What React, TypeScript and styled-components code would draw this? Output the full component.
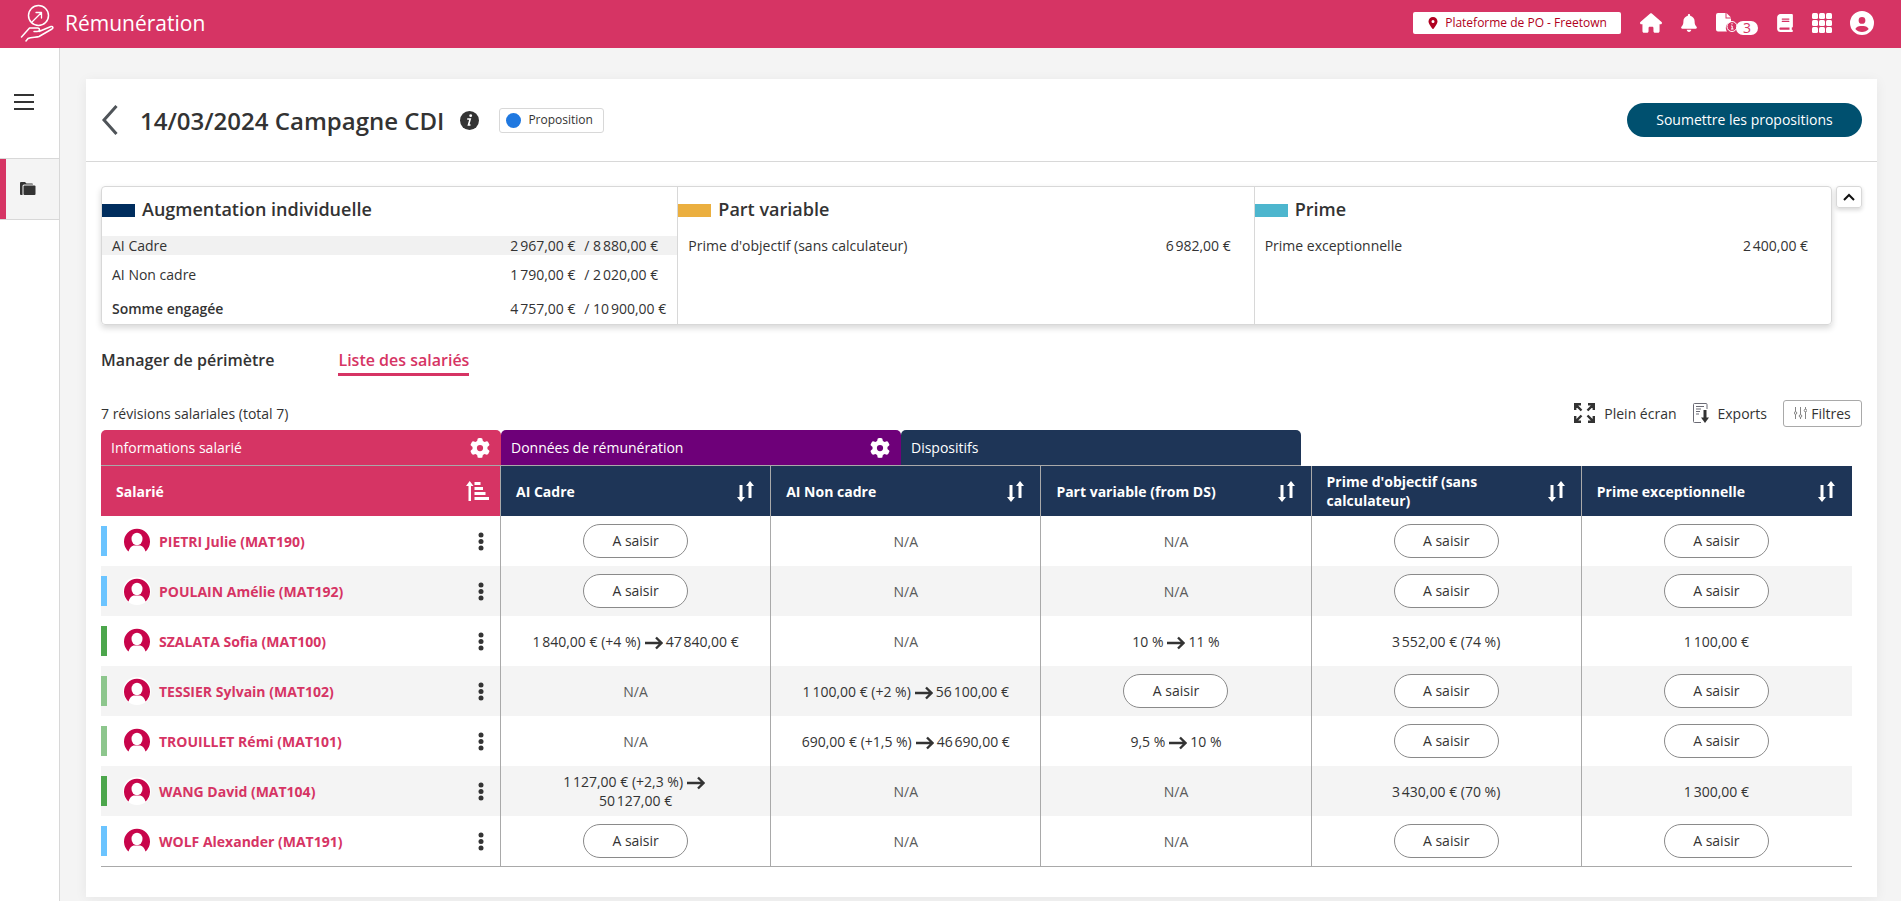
import React from "react";
import styled, { createGlobalStyle } from "styled-components";
import { FaBell, FaBook, FaCircleUser, FaGear, FaHouse, FaLocationDot } from "react-icons/fa6";

const c = {
  brand: "#d63464",
  navy: "#1e3557",
  purple: "#6e0079",
  ink: "#333333",
  line: "#d8d8d8",
  rule: "#a9a9a9",
  grey: "#f4f4f4",
};

const GlobalStyle = createGlobalStyle`
  *, *::before, *::after { box-sizing: border-box; }
  body {
    margin: 0;
    background: ${c.grey};
    color: ${c.ink};
    font: 400 14px/19px "Open Sans", "Noto Sans", sans-serif;
  }
  button { font: inherit; color: inherit; padding: 0; margin: 0; border: 0; background: none; cursor: pointer; }
  a { color: inherit; text-decoration: none; }
  h1, h2, p, dl, dt, dd { margin: 0; }
  svg { display: block; flex: none; }
`;

const Page = styled.div`
  min-height: 100vh;
  display: flex;
  flex-direction: column;
`;

const TopBar = styled.header`
  height: 48px;
  padding: 0 27px 2px 20px;
  display: flex;
  align-items: center;
  background: ${c.brand};
  color: #fff;
`;

const AppName = styled.div`
  flex: 1;
  margin-left: 11px;
  font-size: 21px;
  line-height: 28px;
`;

const SiteButton = styled.button`
  height: 22px;
  width: 208px;
  display: flex;
  align-items: center;
  justify-content: center;
  gap: 6px;
  border-radius: 2px;
  background: #fff;
  color: #b00020;
  font-size: 12px;
  line-height: 16px;
`;

const TopIcons = styled.nav`
  display: flex;
  align-items: center;
  gap: 18px;
  margin-left: 19px;
`;

const IconButton = styled.button`
  display: flex;
  align-items: center;
  position: relative;
`;

const DocButton = styled(IconButton)`
  width: 42px;
`;

const Count = styled.span`
  position: absolute;
  left: 20px;
  top: 8px;
  width: 22px;
  height: 14px;
  border-radius: 7px;
  background: #fff;
  color: ${c.brand};
  font-size: 14px;
  line-height: 14px;
  text-align: center;
`;

const Body = styled.div`
  flex: 1;
  display: flex;
`;

const SideBar = styled.nav`
  width: 60px;
  flex: none;
  background: #fff;
  border-right: 1px solid ${c.line};
`;

const MenuButton = styled.button`
  display: flex;
  align-items: center;
  width: 100%;
  height: 110px;
  padding-left: 14px;
`;

const SideLink = styled.a`
  display: flex;
  align-items: center;
  height: 62px;
  padding-left: 20px;
  border: solid ${c.line};
  border-width: 1px 0;
  background: ${c.grey};
  box-shadow: inset 6px 0 0 ${c.brand};
`;

const Main = styled.main`
  flex: 1;
  min-width: 0;
  padding: 31px 24px 4px 26px;
`;

const Card = styled.section`
  background: #fff;
  box-shadow: 0 2px 12px rgba(0, 0, 0, 0.06);
  padding-bottom: 30px;
`;

const CardHead = styled.div`
  display: flex;
  align-items: center;
  height: 83px;
  padding: 0 15px;
  border-bottom: 1px solid ${c.line};
`;

const Title = styled.h1`
  margin: 0 16px 0 22px;
  padding-top: 2px;
  font-size: 24px;
  line-height: 32px;
  font-weight: 600;
`;

const Status = styled.span`
  display: flex;
  align-items: center;
  gap: 7px;
  height: 25px;
  margin-left: 20px;
  padding: 0 10px 0 6px;
  border: 1px solid ${c.line};
  border-radius: 3px;
  font-size: 12px;
  line-height: 16px;
`;

const StatusDot = styled.i`
  width: 15px;
  height: 15px;
  border-radius: 50%;
  background: #1f78e0;
`;

const Submit = styled.button`
  height: 34px;
  width: 235px;
  margin-left: auto;
  padding-bottom: 2px;
  border-radius: 17px;
  background: #00506f;
  color: #fff;
`;

const Content = styled.div`
  padding: 24px 15px 0;
`;

const Overview = styled.div`
  display: flex;
  align-items: flex-start;
  gap: 4px;
`;

const Envelopes = styled.div`
  flex: 1;
  display: grid;
  grid-template-columns: repeat(3, 1fr);
  border: 1px solid ${c.line};
  border-radius: 4px;
  box-shadow: 0 3px 6px rgba(0, 0, 0, 0.16);
`;

const Envelope = styled.section`
  padding-bottom: 6px;
  border-right: 1px solid ${c.line};
  &:last-child { border-right: 0; }
`;

const EnvelopeTitle = styled.h2<{ $color: string }>`
  display: flex;
  align-items: center;
  gap: 7px;
  height: 24px;
  margin: 10px 0 15px;
  font-size: 18px;
  line-height: 24px;
  font-weight: 600;
  &::before {
    content: "";
    width: 33px;
    height: 13px;
    margin-top: 2px;
    background: ${(p) => p.$color};
  }
`;

const EnvelopeRow = styled.div<{ $shaded?: boolean; $total?: boolean }>`
  display: flex;
  height: 19px;
  margin-top: ${(p) => (p.$total ? 15 : 10)}px;
  padding-left: 10px;
  background: ${(p) => (p.$shaded ? "#f1f1f1" : "none")};
  &:first-child { margin-top: 0; }
  dt { flex: 1; font-weight: ${(p) => (p.$total ? 600 : 400)}; }
`;

const Spent = styled.dd<{ $alone?: boolean }>`
  width: ${(p) => (p.$alone ? 88 : 74)}px;
`;

const Budget = styled.dd`
  width: 93px;
`;

const Toggle = styled.button`
  display: flex;
  align-items: center;
  justify-content: center;
  width: 26px;
  height: 22px;
  border: 1px solid ${c.line};
  border-radius: 3px;
  box-shadow: 0 2px 4px rgba(0, 0, 0, 0.16);
`;

const Tabs = styled.nav`
  display: flex;
  gap: 64px;
  margin-top: 21px;
`;

const Tab = styled.a<{ $active?: boolean }>`
  height: 30px;
  padding-top: 3px;
  font-size: 16px;
  line-height: 22px;
  font-weight: 600;
  color: ${(p) => (p.$active ? c.brand : c.ink)};
  border-bottom: 3px solid ${(p) => (p.$active ? c.brand : "transparent")};
`;

const Tools = styled.div`
  display: flex;
  align-items: center;
  height: 28px;
  margin-top: 23px;
  p { flex: 1; }
`;

const Tool = styled.button`
  display: flex;
  align-items: center;
  gap: 9px;
  margin-right: 16px;
`;

const FilterButton = styled.button`
  display: flex;
  align-items: center;
  justify-content: center;
  gap: 4px;
  width: 79px;
  height: 27px;
  border: 1px solid ${c.rule};
  border-radius: 3px;
`;

const Groups = styled.div`
  display: flex;
  margin-top: 3px;
`;

const Group = styled.div<{ $bg: string }>`
  display: flex;
  align-items: center;
  justify-content: space-between;
  width: 400px;
  height: 36px;
  padding: 0 11px 0 10px;
  border-bottom: 1px solid ${c.rule};
  border-radius: 5px 5px 0 0;
  background: ${(p) => p.$bg};
  color: #fff;
`;

const Table = styled.table`
  width: calc(100% - 10px);
  table-layout: fixed;
  border-collapse: separate;
  border-spacing: 0;
  border-bottom: 1px solid ${c.rule};
  tbody tr:nth-child(even) { background: ${c.grey}; }
`;

const NameCol = styled.col`
  width: 400px;
`;

const HeadCell = styled.th<{ $bg: string }>`
  height: 50px;
  padding: 0 16px 0 15px;
  background: ${(p) => p.$bg};
  color: #fff;
  font-weight: 700;
  text-align: left;
  border-right: 1px solid ${c.rule};
  &:first-child { padding-right: 11px; }
  &:last-child { border-right-color: ${(p) => p.$bg}; }
`;

const HeadInner = styled.div`
  display: flex;
  align-items: center;
  justify-content: space-between;
  gap: 40px;
`;

const Cell = styled.td`
  height: 50px;
  padding: 0 28px;
  text-align: center;
  border-right: 1px solid ${c.rule};
  &:last-child { border-right-color: transparent; }
`;

const NameCell = styled.th`
  height: 50px;
  padding: 0;
  border-right: 1px solid ${c.rule};
  text-align: left;
`;

const Person = styled.div`
  display: flex;
  align-items: center;
  padding-right: 16px;
`;

const Stripe = styled.i<{ $color: string }>`
  width: 6px;
  height: 30px;
  margin-right: 16px;
  background: ${(p) => p.$color};
`;

const PersonLink = styled.a`
  flex: 1;
  margin-left: 8px;
  color: ${c.brand};
  font-weight: 700;
`;

const Enter = styled.button`
  width: 105px;
  height: 34px;
  padding-bottom: 2px;
  border: 1px solid #8a8a8a;
  border-radius: 17px;
  background: #fff;
  vertical-align: middle;
`;

const None = styled.span`
  color: #5a5a5a;
`;

const Arrow = styled.svg`
  display: inline-block;
  margin: 0 3px 0 4px;
  vertical-align: -3px;
`;

const Logo = () => (
  <svg width="34" height="40" viewBox="0 0 34 40" fill="none" stroke="#fff" strokeWidth="1.5" strokeLinecap="round" strokeLinejoin="round">
    <circle cx="18.5" cy="12.500" r="10" />
    <path d="M11.500 19.500 21.500 9.500M16 9.500h5.500V15" strokeWidth="1.3" />
    <path d="M1.500 34 9.500 25h8c2.500 0 3 3.500-.5 3.500H14M19 28.500 31 23.500c2-.5 2.500 1.500 1 2.500L19 33.500c-2 1-8 .5-11 2l-2 2.500" />
  </svg>
);

const DocIcon = () => (
  <svg width="22" height="20" viewBox="0 0 22 20">
    <path d="M2 0h7.500v5.500H15V9a6 6 0 0 0-4 9.500H2a2 2 0 0 1-2-2V2a2 2 0 0 1 2-2z" fill="#fff" />
    <path d="M10.500 0 15 4.500h-4.500z" fill="#fff" />
    <circle cx="16" cy="13.500" r="5" fill="none" stroke="#fff" />
    <path d="M16 10v1.500M15 13h1.200v3M15 16h2.500" stroke="#fff" fill="none" />
  </svg>
);

const GridIcon = () => (
  <svg width="20" height="20" viewBox="0 0 20 20" fill="#fff">
    {[0, 7, 14].map((y) => [0, 7, 14].map((x) => <rect key={`${x}-${y}`} x={x} y={y} width="6" height="6" rx="1.500" />))}
  </svg>
);

const MenuIcon = () => (
  <svg width="20" height="18" viewBox="0 0 20 18" stroke={c.ink} strokeWidth="2">
    <path d="M0 1h20M0 8h20M0 15h20" />
  </svg>
);

const FolderIcon = () => (
  <svg width="16" height="14" viewBox="0 0 16 14" fill={c.ink}>
    <path d="M1 0h4l1.500 1.500H12q1 0 1 1H4Q2.500 2.500 2.500 4v9H1q-1 0-1-1V1q0-1 1-1z" />
    <path d="M4.500 3.500h10q1 0 1 1V12q0 1-1 1h-10q-1 0-1-1V4.500q0-1 1-1z" />
  </svg>
);

const BackIcon = () => (
  <svg width="17" height="30" viewBox="0 0 17 30" fill="none" stroke="#4f5459" strokeWidth="3">
    <path d="M15.500 1 3 15l12.500 14" />
  </svg>
);

const InfoIcon = () => (
  <svg width="19" height="19" viewBox="0 0 19 19">
    <circle cx="9.500" cy="9.500" r="9.500" fill={c.ink} />
    <circle cx="10.700" cy="4.700" r="1.400" fill="#fff" />
    <path d="M7.200 8h3l-1.700 6h2" fill="none" stroke="#fff" strokeWidth="1.600" />
  </svg>
);

const ExpandIcon = () => (
  <svg width="21" height="20" viewBox="0 0 21 20" fill={c.ink} stroke={c.ink} strokeWidth="2.400">
    <path d="M1.200 7V1.200H7M1.200 1.200 7.500 7.500M14 1.200h5.800V7M19.800 1.200l-6.300 6.300M1.200 13v5.800H7M1.200 18.800l6.300-6.300M19.800 13v5.800H14M19.800 18.800l-6.300-6.300" fill="none" />
  </svg>
);

const ExportIcon = () => (
  <svg width="16" height="20" viewBox="0 0 16 20" fill="none" stroke="#6b6b75">
    <path d="M14 6V1.500q0-1-1-1H1.500q-1 0-1 1v17q0 1 1 1H8M3 3.500h8M3 6h5M3 8.500h4M3 11h3" />
    <path d="M12 7v9" stroke={c.ink} strokeWidth="3" />
    <path d="M8 14.500h8L12 20z" fill={c.ink} stroke="none" />
  </svg>
);

const SlidersIcon = () => (
  <svg width="13" height="13" viewBox="0 0 13 13" fill="#fff" stroke="#858585">
    <path d="M1.500 0v12M6.500 0v12M11.500 0v12" />
    <circle cx="1.500" cy="6" r="1.300" />
    <circle cx="6.500" cy="9" r="1.300" />
    <circle cx="11.500" cy="3.500" r="1.300" />
  </svg>
);

const ChevronUp = () => (
  <svg width="12" height="8" viewBox="0 0 12 8" fill="none" stroke="#111" strokeWidth="2">
    <path d="m1 7 5-5 5 5" />
  </svg>
);

const SortIcon = () => (
  <svg width="17" height="21" viewBox="0 0 17 21" fill="#fff">
    <path d="M2.500 4h3v12H8l-4 5-4-5h2.500zM11.500 17h3V5H17l-4-5-4 5h2.500z" />
  </svg>
);

const SortedIcon = () => (
  <svg width="23" height="20" viewBox="0 0 23 20" fill="#fff">
    <path d="M2.500 20h2.500V5h2.500L3.700 0 0 5h2.500zM8.500 1h6v3h-6zM8.500 6h8.500v3H8.500zM8.500 11h11v3h-11zM8.500 16H23v3H8.500z" />
  </svg>
);

const Avatar = () => (
  <svg width="28" height="28" viewBox="0 0 28 28">
    <circle cx="14" cy="14" r="14" fill="#fff" />
    <path d="M5.500 24.500A13 13 0 1 1 22.500 24.500Q21 19.500 17.500 18.500h-7Q7 19.500 5.500 24.500z" fill="#c8054b" />
    <ellipse cx="14" cy="12" rx="5.500" ry="6.200" fill="#fff" />
  </svg>
);

const Kebab = () => (
  <svg width="6" height="20" viewBox="0 0 6 20" fill={c.ink}>
    <circle cx="3" cy="4" r="2.500" />
    <circle cx="3" cy="10.500" r="2.500" />
    <circle cx="3" cy="17" r="2.500" />
  </svg>
);

const ArrowIcon = () => (
  <Arrow width="18" height="14" viewBox="0 0 18 14" fill="none" stroke={c.ink} strokeWidth="2.400">
    <path d="M0 7h16M11 1.500 16.500 7 11 12.500" />
  </Arrow>
);

/* French amounts: narrow no-break space between thousands, no-break space before the unit. */
const fr = (text: string) => text.replace(/(\d) (\d{3},)/g, "$1\u202f$2").replace(/ ([€%])/g, "\u00a0$1").replace("€ (", "€\u00a0(");

type EnvelopeData = {
  title: string;
  color: string;
  rows: { label: string; spent: string; budget?: string; shaded?: boolean; total?: boolean }[];
};

const envelopes: EnvelopeData[] = [
  {
    title: "Augmentation individuelle",
    color: "#002d5e",
    rows: [
      { label: "AI Cadre", spent: "2 967,00 €", budget: "/ 8 880,00 €", shaded: true },
      { label: "AI Non cadre", spent: "1 790,00 €", budget: "/ 2 020,00 €" },
      { label: "Somme engagée", spent: "4 757,00 €", budget: "/ 10 900,00 €", total: true },
    ],
  },
  { title: "Part variable", color: "#ebaf3f", rows: [{ label: "Prime d'objectif (sans calculateur)", spent: "6 982,00 €" }] },
  { title: "Prime", color: "#4db6ce", rows: [{ label: "Prime exceptionnelle", spent: "2 400,00 €" }] },
];

const columns = ["AI Cadre", "AI Non cadre", "Part variable (from DS)", "Prime d'objectif (sans calculateur)", "Prime exceptionnelle"];

const ENTER = "A saisir";
const NA = "N/A";
const blue = "#6bc4ff";
const green = "#4ca64c";
const lightGreen = "#8dc68d";

const people: { name: string; color: string; cells: string[] }[] = [
  { name: "PIETRI Julie (MAT190)", color: blue, cells: [ENTER, NA, NA, ENTER, ENTER] },
  { name: "POULAIN Amélie (MAT192)", color: blue, cells: [ENTER, NA, NA, ENTER, ENTER] },
  { name: "SZALATA Sofia (MAT100)", color: green, cells: ["1 840,00 € (+4 %)>47 840,00 €", NA, "10 %>11 %", "3 552,00 € (74 %)", "1 100,00 €"] },
  { name: "TESSIER Sylvain (MAT102)", color: lightGreen, cells: [NA, "1 100,00 € (+2 %)>56 100,00 €", ENTER, ENTER, ENTER] },
  { name: "TROUILLET Rémi (MAT101)", color: lightGreen, cells: [NA, "690,00 € (+1,5 %)>46 690,00 €", "9,5 %>10 %", ENTER, ENTER] },
  { name: "WANG David (MAT104)", color: green, cells: ["1 127,00 € (+2,3 %)>50 127,00 €", NA, NA, "3 430,00 € (70 %)", "1 300,00 €"] },
  { name: "WOLF Alexander (MAT191)", color: blue, cells: [ENTER, NA, NA, ENTER, ENTER] },
];

const Value = ({ text }: { text: string }) => {
  if (text === ENTER) return <Enter type="button">{text}</Enter>;
  if (text === NA) return <None>{text}</None>;
  const [before, after] = fr(text).split(">");
  return after ? <>{before}<ArrowIcon />{after}</> : <>{before}</>;
};

export default function App() {
  return (
    <Page>
      <GlobalStyle />
      <TopBar>
        <Logo />
        <AppName>Rémunération</AppName>
        <SiteButton type="button"><FaLocationDot size={12} />Plateforme de PO - Freetown</SiteButton>
        <TopIcons aria-label="Raccourcis">
          <IconButton type="button" aria-label="Accueil"><FaHouse size={22} /></IconButton>
          <IconButton type="button" aria-label="Notifications"><FaBell size={18} /></IconButton>
          <DocButton type="button" aria-label="Documents"><DocIcon /><Count>3</Count></DocButton>
          <IconButton type="button" aria-label="Guide"><FaBook size={18} /></IconButton>
          <IconButton type="button" aria-label="Applications"><GridIcon /></IconButton>
          <IconButton type="button" aria-label="Profil"><FaCircleUser size={24} /></IconButton>
        </TopIcons>
      </TopBar>
      <Body>
        <SideBar aria-label="Navigation">
          <MenuButton type="button" aria-label="Menu"><MenuIcon /></MenuButton>
          <SideLink href="#campagnes" aria-label="Campagnes"><FolderIcon /></SideLink>
        </SideBar>
        <Main>
          <Card>
            <CardHead>
              <IconButton type="button" aria-label="Retour"><BackIcon /></IconButton>
              <Title>14/03/2024 Campagne CDI</Title>
              <IconButton type="button" aria-label="Informations"><InfoIcon /></IconButton>
              <Status><StatusDot />Proposition</Status>
              <Submit type="button">Soumettre les propositions</Submit>
            </CardHead>
            <Content>
              <Overview>
                <Envelopes>
                  {envelopes.map((e) => (
                    <Envelope key={e.title}>
                      <EnvelopeTitle $color={e.color}>{e.title}</EnvelopeTitle>
                      <dl>
                        {e.rows.map((r) => (
                          <EnvelopeRow key={r.label} $shaded={r.shaded} $total={r.total}>
                            <dt>{r.label}</dt>
                            <Spent $alone={!r.budget}>{fr(r.spent)}</Spent>
                            {r.budget && <Budget>{fr(r.budget)}</Budget>}
                          </EnvelopeRow>
                        ))}
                      </dl>
                    </Envelope>
                  ))}
                </Envelopes>
                <Toggle type="button" aria-label="Replier"><ChevronUp /></Toggle>
              </Overview>
              <Tabs aria-label="Vues">
                <Tab href="#perimetre">Manager de périmètre</Tab>
                <Tab href="#salaries" $active aria-current="page">Liste des salariés</Tab>
              </Tabs>
              <Tools>
                <p>7 révisions salariales (total 7)</p>
                <Tool type="button"><ExpandIcon />Plein écran</Tool>
                <Tool type="button"><ExportIcon />Exports</Tool>
                <FilterButton type="button"><SlidersIcon />Filtres</FilterButton>
              </Tools>
              <Groups>
                <Group $bg={c.brand}>Informations salarié<IconButton type="button" aria-label="Configurer les informations"><FaGear size={20} /></IconButton></Group>
                <Group $bg={c.purple}>Données de rémunération<IconButton type="button" aria-label="Configurer les données"><FaGear size={20} /></IconButton></Group>
                <Group $bg={c.navy}>Dispositifs</Group>
              </Groups>
              <Table>
                <colgroup>
                  <NameCol />
                  {columns.map((name) => <col key={name} />)}
                </colgroup>
                <thead>
                  <tr>
                    <HeadCell $bg={c.brand} scope="col" aria-sort="ascending">
                      <HeadInner>Salarié<IconButton type="button" aria-label="Trier par salarié"><SortedIcon /></IconButton></HeadInner>
                    </HeadCell>
                    {columns.map((name) => (
                      <HeadCell $bg={c.navy} scope="col" key={name}>
                        <HeadInner>{name}<IconButton type="button" aria-label={`Trier par ${name}`}><SortIcon /></IconButton></HeadInner>
                      </HeadCell>
                    ))}
                  </tr>
                </thead>
                <tbody>
                  {people.map((p) => (
                    <tr key={p.name}>
                      <NameCell scope="row">
                        <Person>
                          <Stripe $color={p.color} />
                          <Avatar />
                          <PersonLink href="#salarie">{p.name}</PersonLink>
                          <IconButton type="button" aria-label={`Actions pour ${p.name}`}><Kebab /></IconButton>
                        </Person>
                      </NameCell>
                      {p.cells.map((text, i) => <Cell key={i}><Value text={text} /></Cell>)}
                    </tr>
                  ))}
                </tbody>
              </Table>
            </Content>
          </Card>
        </Main>
      </Body>
    </Page>
  );
}
